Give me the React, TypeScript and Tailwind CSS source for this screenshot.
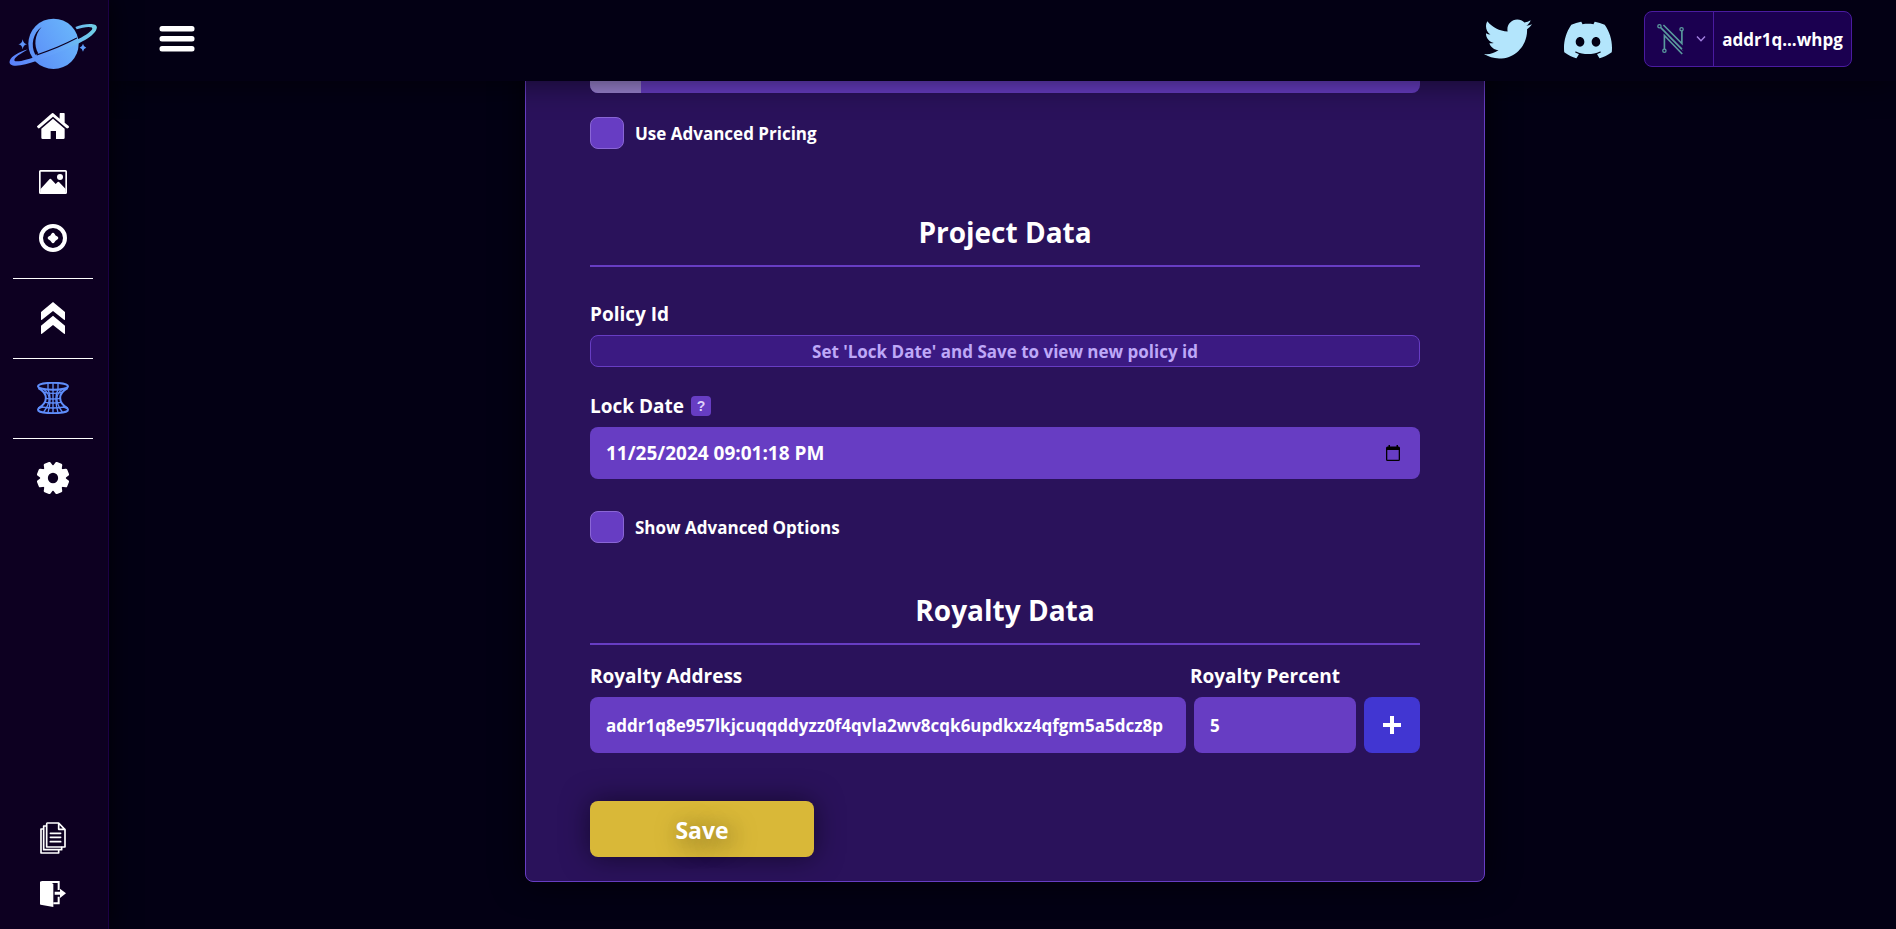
import { useState, type ReactNode } from "react";
import { FaTwitter } from "react-icons/fa";
import { SiDiscord } from "react-icons/si";

function PlanetLogo() {
  return (
    <svg viewBox="24 50 272 160" className="h-[53px] w-[91px]" aria-hidden="true">
      <defs>
        <linearGradient id="planet" x1="0" y1="0.8" x2="1" y2="0.2">
          <stop offset="0" stopColor="#5b8df8" />
          <stop offset="1" stopColor="#6ab7fb" />
        </linearGradient>
        <linearGradient id="ring" x1="0" y1="0" x2="1" y2="0">
          <stop offset="0" stopColor="#5a80fb" />
          <stop offset="0.6" stopColor="#66a8fa" />
          <stop offset="1" stopColor="#70d0e4" />
        </linearGradient>
      </defs>
      <circle cx="160" cy="131" r="76" fill="url(#planet)" />
      <path d="M124 80 C98 98 90 135 105 164 L114 160 C100 135 103 104 124 80 Z" fill="#0d0021" />
      <path
        d="M226 80 C252 70 292 66 291 82 C289 108 232 133 190 150 C150 166 100 188 60 196 C38 200 24 195 28 182 C32 168 58 154 82 148 C62 160 40 172 42 181 C46 189 84 178 116 166 C160 150 208 131 244 112 C264 101 282 88 276 82 C268 77 246 82 230 87 Z"
        fill="url(#ring)"
      />
      <path d="M108 163 C150 150 192 132 230 112 L231 115 C194 135 152 153 110 166 Z" fill="#0d0021" />
      <path d="M67 117 Q69 130 80 132 Q69 134 67 147 Q65 134 54 132 Q65 130 67 117 Z" fill="#5f95fa" />
      <path d="M249 131 Q251 141 259 143 Q251 145 249 155 Q247 145 239 143 Q247 141 249 131 Z" fill="#5f9dfa" />
    </svg>
  );
}

function HomeIcon() {
  return (
    <svg viewBox="0 0 96 78" className="h-[26px] w-8" fill="currentColor" aria-hidden="true">
      <path d="M48 0 L68 17 V2 Q68 0 70 0 H81 Q83 0 83 2 V29 L95 39 Q97 42 95 44 L92 46 Q90 47 88 45 L48 11 L8 45 Q6 47 4 46 L1 43 Q-1 41 1 39 L43 2 Q48 -1 48 0 Z" />
      <path d="M48 17 L83 47 V74 Q83 78 79 78 H57 V54 H41 V78 H17 Q13 78 13 74 V47 Z" />
    </svg>
  );
}

function ImageIcon() {
  return (
    <svg viewBox="0 0 84 72" className="h-6 w-7" aria-hidden="true">
      <rect x="2.5" y="2.5" width="79" height="67" rx="2" fill="none" stroke="currentColor" strokeWidth="5" />
      <path d="M4 58 L32 27 Q34 25 36 27 L50 42 L56 36 Q58 34 60 36 L80 57 V70 H4 Z" fill="currentColor" />
      <circle cx="63" cy="21" r="9" fill="currentColor" />
    </svg>
  );
}

function TokenIcon() {
  return (
    <svg viewBox="0 0 84 84" className="size-7" aria-hidden="true">
      <circle cx="42" cy="42" r="36" fill="none" stroke="currentColor" strokeWidth="12" />
      <path d="M42 26 Q45 26 47 30 Q49 35 54 37 Q58 39 58 42 Q58 45 54 47 Q49 49 47 54 Q45 58 42 58 Q39 58 37 54 Q35 49 30 47 Q26 45 26 42 Q26 39 30 37 Q35 35 37 30 Q39 26 42 26 Z" fill="currentColor" />
    </svg>
  );
}

function ChevronsIcon() {
  return (
    <svg viewBox="0 0 72 96" className="h-8 w-6" fill="currentColor" aria-hidden="true">
      <path d="M36 0 L72 30 V53 L70 54 L36 27 L2 54 L0 53 V30 Z" />
      <path d="M36 41 L72 71 V95 L70 96 L36 69 L2 96 L0 95 V71 Z" />
    </svg>
  );
}

function WormholeIcon() {
  return (
    <svg viewBox="0 0 96 96" className="size-8" fill="none" stroke="#5f8dfb" strokeWidth="6" aria-hidden="true">
      <ellipse cx="48" cy="13" rx="45" ry="10.5" />
      <path d="M3 83 A45 10.5 0 0 0 93 83 M3 83 C3 79 8 76 17 74 M93 83 C93 79 88 76 79 74" />
      <path d="M4 18 C34 34 34 62 4 79 M92 18 C62 34 62 62 92 79" />
      <g strokeWidth="4">
        <path d="M20 22 C42 38 42 60 20 90 M76 22 C54 38 54 60 76 90" />
        <path d="M33 5 V23 C42 40 42 60 33 92 M63 5 V23 C54 40 54 60 63 92 M48 3 V94" />
        <path d="M20 31 Q48 37 76 31 M26 49 Q48 53 70 49 M24 61 Q48 65 72 61 M14 75 Q48 81 82 75" />
      </g>
    </svg>
  );
}

const gearTeeth = [22.5, 67.5, 112.5, 157.5];

function GearIcon() {
  return (
    <svg viewBox="-48 -48 96 96" className="size-8" fill="none" stroke="currentColor" aria-hidden="true">
      <circle r="27" strokeWidth="23" />
      {gearTeeth.map((angle) => (
        <g key={angle} transform={`rotate(${angle})`} fill="currentColor" stroke="none">
          <path d="M-14 -34 L-11 -46 Q-10 -49 -7 -49 H7 Q10 -49 11 -46 L14 -34 Z" />
          <path d="M-14 34 L-11 46 Q-10 49 -7 49 H7 Q10 49 11 46 L14 34 Z" />
        </g>
      ))}
    </svg>
  );
}

function DocumentsIcon() {
  return (
    <svg viewBox="0 0 78 96" className="h-8 w-[26px]" fill="none" stroke="currentColor" strokeWidth="5" strokeLinejoin="round" strokeLinecap="round" aria-hidden="true">
      <path d="M22 3 H56 L75 23 V75 H20 V6 Q20 3 22 3 Z M56 3 V22 H75" />
      <path d="M19 12 H11 V83 H65 V76 M10 21 H3 V93 H56 V85" />
      <path d="M31 34 H62 M31 46 H62 M31 59 H62" />
    </svg>
  );
}

function ExitIcon() {
  return (
    <svg viewBox="0 0 78 78" className="size-[26px]" fill="currentColor" aria-hidden="true">
      <path d="M0 2 H30 L40 9 V78 L2 71 Q0 71 0 69 Z" />
      <path d="M0 0 H59 V27 H53 V6 H12 Z M40 70 H59 V47 H53 V64 H40 Z" />
      <path d="M44 32 H60 V23 L78 37 L60 51 V41 H44 Z" />
    </svg>
  );
}

function WalletLogo() {
  return (
    <svg viewBox="0 0 84 100" className="h-[33px] w-7 shrink-0" fill="none" stroke="#5a9a9e" strokeWidth="4" aria-hidden="true">
      <circle cx="7" cy="10" r="5" />
      <circle cx="74" cy="19" r="5" />
      <circle cx="22" cy="84" r="5" />
      <path d="M11 14 L75 79" strokeWidth="5" />
      <path d="M19 6 L75 62 V24" strokeWidth="5" />
      <path d="M22 79 V38 L76 94" strokeWidth="5" />
      <path d="M40 46 L78 84" strokeWidth="1.5" />
    </svg>
  );
}

function NavLink({ label, children }: { label: string; children: ReactNode }) {
  return (
    <a href="#" aria-label={label} className="flex h-14 w-full items-center justify-center text-white">
      {children}
    </a>
  );
}

function NavDivider() {
  return (
    <div className="flex h-6 items-center">
      <hr className="w-20 border-t border-white" />
    </div>
  );
}

function SectionTitle({ children }: { children: ReactNode }) {
  return (
    <h2 className="border-b-2 border-[#673dc3] pb-[13px] text-center text-[28px] leading-10 font-bold">
      {children}
    </h2>
  );
}

function CheckRow({ id, label }: { id: string; label: string }) {
  return (
    <div className="flex items-center gap-[11px]">
      <input
        id={id}
        type="checkbox"
        className="h-8 w-[34px] appearance-none rounded-lg border border-[#8a66d6] bg-[#673dc3] checked:bg-[#a78bfa]"
      />
      <label htmlFor={id} className="pt-0.5 text-[17px] leading-6 font-bold">
        {label}
      </label>
    </div>
  );
}

export default function App() {
  const [lockDate, setLockDate] = useState("11/25/2024 09:01:18 PM");
  const [address, setAddress] = useState("addr1q8e957lkjcuqqddyzz0f4qvla2wv8cqk6updkxz4qfgm5a5dcz8p");
  const [percent, setPercent] = useState("5");

  return (
    <div className="flex h-screen overflow-hidden bg-[#030014] font-['Open_Sans','Noto_Sans',sans-serif] text-white">
      <nav className="relative z-20 flex w-[109px] shrink-0 flex-col items-center border-r border-[#1c0045] bg-[#0d0021] pr-[2px] shadow-[0_0_24px_rgba(0,0,0,0.8)]">
        <a href="#" aria-label="Home page" className="mt-[17px] mb-7">
          <PlanetLogo />
        </a>
        <NavLink label="Home"><HomeIcon /></NavLink>
        <NavLink label="Gallery"><ImageIcon /></NavLink>
        <NavLink label="Tokens"><TokenIcon /></NavLink>
        <NavDivider />
        <NavLink label="Upgrade"><ChevronsIcon /></NavLink>
        <NavDivider />
        <NavLink label="Portal"><WormholeIcon /></NavLink>
        <NavDivider />
        <NavLink label="Settings"><GearIcon /></NavLink>
        <div className="mt-auto mb-[7px] w-full">
          <NavLink label="Documents"><DocumentsIcon /></NavLink>
          <NavLink label="Log out"><ExitIcon /></NavLink>
        </div>
      </nav>

      <div className="flex min-w-0 flex-1 flex-col">
        <header className="relative z-10 flex h-[81px] shrink-0 items-center justify-between bg-[#030014] pr-11 pb-[3px] pl-[50px] shadow-[0_0_32px_rgba(0,0,0,0.6)]">
          <button type="button" aria-label="Menu">
            <svg viewBox="0 0 36 26" className="h-[26px] w-9" fill="#fff" aria-hidden="true">
              <rect x="0.5" y="0" width="35" height="5.5" rx="2.5" />
              <rect x="0.5" y="10" width="35" height="5.5" rx="2.5" />
              <rect x="0.5" y="20" width="35" height="5.5" rx="2.5" />
            </svg>
          </button>
          <div className="flex items-center gap-8">
            <a href="#" aria-label="Twitter" className="text-[#b3e5fc]"><FaTwitter className="size-12" /></a>
            <a href="#" aria-label="Discord" className="text-[#b3e5fc]"><SiDiscord className="mt-0.5 size-12" /></a>
            <div className="flex h-14 w-52 rounded-lg border border-[#4a1ba0] bg-[#1b0050]">
              <button type="button" aria-label="Choose wallet" className="flex w-[69px] items-center gap-[11px] border-r border-[#4a1ba0] pl-3">
                <WalletLogo />
                <svg viewBox="0 0 10 6" className="h-[6px] w-[10px]" fill="none" stroke="#a27fe0" strokeWidth="1.4" aria-hidden="true">
                  <path d="M1 0.5 L5 4.8 L9 0.5" />
                </svg>
              </button>
              <button type="button" className="flex-1 pt-0.5 text-[17px] font-bold">addr1q...whpg</button>
            </div>
          </div>
        </header>

        <main className="flex-1 overflow-hidden pl-[5px]">
          <form
            onSubmit={(e) => e.preventDefault()}
            className="mx-auto -mt-16 w-full max-w-[960px] rounded-lg border border-[#673dc3] bg-[#2a125b] px-16 pt-[19px] pb-6 shadow-[0_0_32px_rgba(0,0,0,0.7)]"
          >
            <div className="mb-6 flex h-14 overflow-hidden rounded-lg bg-[#673dc3]">
              <span className="w-[51px] bg-[#9a83d0]" />
              <input type="text" aria-label="Price" className="min-w-0 flex-1 bg-transparent px-4 text-[17px] font-bold outline-none" />
            </div>
            <CheckRow id="advanced-pricing" label="Use Advanced Pricing" />

            <div className="mt-[63px]">
              <SectionTitle>Project Data</SectionTitle>
            </div>

            <p className="mt-[33px] mb-[7px] text-[19px] leading-7 font-bold">Policy Id</p>
            <div className="flex h-8 items-center justify-center rounded-lg border border-[#673dc3] bg-[#3b1a82] pt-0.5 text-[17px] font-bold text-[#bea8f8]">
              Set 'Lock Date' and Save to view new policy id
            </div>

            <div className="mt-[25px] mb-[7px] flex items-center gap-[7px]">
              <label htmlFor="lock-date" className="text-[19px] leading-7 font-bold">Lock Date</label>
              <button type="button" className="size-5 rounded bg-[#673dc3] font-['Liberation_Sans',sans-serif] text-[14px] leading-5 font-bold text-[#ded2fb]">
                ?
              </button>
            </div>
            <div className="flex h-[52px] items-center rounded-lg bg-[#673dc3] pr-[15px] pl-4">
              <input
                id="lock-date"
                type="text"
                value={lockDate}
                onChange={(e) => setLockDate(e.target.value)}
                className="h-full min-w-0 flex-1 bg-transparent text-[19px] font-bold outline-none"
              />
              <button type="button" aria-label="Open calendar" className="flex size-6 items-center justify-center">
                <svg viewBox="0 0 14 16" className="h-4 w-[14px]" fill="#000" aria-hidden="true">
                  <path d="M1.5 1.5 H2.5 V0 H4 V1.5 H10.5 V0 H12 V1.5 H12.5 Q14 1.5 14 3 V14.5 Q14 16 12.5 16 H1.5 Q0 16 0 14.5 V3 Q0 1.5 1.5 1.5 Z M1.3 5 V14.7 H12.7 V5 Z" fillRule="evenodd" />
                </svg>
              </button>
            </div>

            <div className="mt-8">
              <CheckRow id="advanced-options" label="Show Advanced Options" />
            </div>

            <div className="mt-[47px]">
              <SectionTitle>Royalty Data</SectionTitle>
            </div>

            <div className="mt-[17px] flex items-end gap-2">
              <div className="min-w-0 flex-1">
                <label htmlFor="royalty-address" className="mb-[7px] block text-[19px] leading-7 font-bold">Royalty Address</label>
                <input
                  id="royalty-address"
                  type="text"
                  value={address}
                  onChange={(e) => setAddress(e.target.value)}
                  className="h-14 w-full rounded-lg bg-[#673dc3] px-4 text-[17px] font-bold outline-none"
                />
              </div>
              <div className="w-[162px]">
                <label htmlFor="royalty-percent" className="mb-[7px] -ml-1 block text-[19px] leading-7 font-bold">Royalty Percent</label>
                <input
                  id="royalty-percent"
                  type="text"
                  value={percent}
                  onChange={(e) => setPercent(e.target.value)}
                  className="h-14 w-full rounded-lg bg-[#673dc3] px-4 text-[17px] font-bold outline-none"
                />
              </div>
              <button type="button" aria-label="Add royalty" className="flex size-14 items-center justify-center rounded-lg bg-[#4136d2]">
                <svg viewBox="0 0 18 18" className="size-[18px]" stroke="#fff" strokeWidth="4" aria-hidden="true">
                  <path d="M0 9 H18 M9 0 V18" />
                </svg>
              </button>
            </div>

            <button
              type="submit"
              className="mt-12 block h-14 w-56 rounded-lg bg-[#d9b838] pt-0.5 text-[23px] font-bold shadow-[0_0_28px_rgba(0,0,0,0.5)] [text-shadow:4px_4px_24px_rgba(0,0,0,0.6)]"
            >
              Save
            </button>
          </form>
        </main>
      </div>
    </div>
  );
}
